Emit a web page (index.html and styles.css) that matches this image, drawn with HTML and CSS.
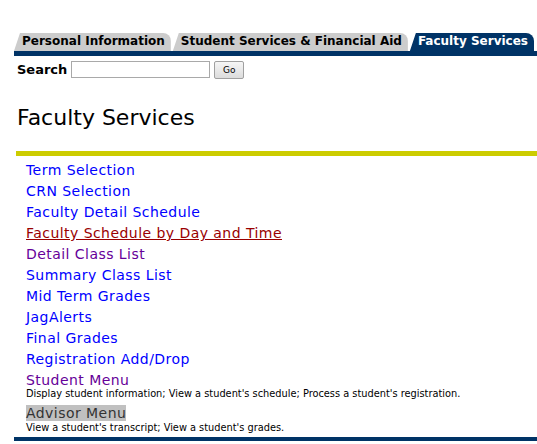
FILE: index.html
```html
<!DOCTYPE html>
<html lang="en">
<head>
    <meta charset="UTF-8">
    <title>Faculty Services</title>
    <link rel="stylesheet" href="styles.css">
</head>
<body>
    <div class="tabs">
        <a class="tab" href="#">Personal Information</a>
        <a class="tab" href="#">Student Services &amp; Financial Aid</a>
        <a class="tab active" href="#">Faculty Services</a>
    </div>
    <div class="tab-bar"></div>

    <form class="search">
        <label for="keyword">Search</label>
        <input type="text" id="keyword" name="keyword">
        <button type="submit">Go</button>
    </form>

    <h1>Faculty Services</h1>
    <div class="rule"></div>

    <div class="menu">
        <a href="#">Term Selection</a>
        <a href="#">CRN Selection</a>
        <a href="#">Faculty Detail Schedule</a>
        <a href="#" class="hover">Faculty Schedule by Day and Time</a>
        <a href="#" class="visited">Detail Class List</a>
        <a href="#">Summary Class List</a>
        <a href="#">Mid Term Grades</a>
        <a href="#">JagAlerts</a>
        <a href="#">Final Grades</a>
        <a href="#">Registration Add/Drop</a>
        <div class="item">
            <a href="#" class="visited">Student Menu</a>
            <span class="desc">Display student information; View a student's schedule; Process a student's registration.</span>
        </div>
        <div class="item second">
            <a href="#" class="focus"><span>Advisor Menu</span></a>
            <span class="desc">View a student's transcript; View a student's grades.</span>
        </div>
    </div>

    <div class="footer-bar"></div>
    <div class="release">RELEASE: 8.7</div>
</body>
</html>
```

FILE: styles.css
```css
:root {
    --navy: #003366;
    --tab-gray: #cccccc;
    --olive: #cccc00;
    --link: #0000ff;
    --visited: #660099;
    --hover: #990000;
}

body {
    margin: 0;
    padding: 0 0 0 14px;
    font-family: 'DejaVu Sans', Verdana, sans-serif;
    color: #000;
    background: #fff;
}

.tabs {
    display: flex;
    align-items: flex-end;
    gap: 2px;
    padding-top: 33px;
    height: 18px;
}

.tab {
    display: block;
    height: 18px;
    line-height: 17px;
    padding: 0 6px 0 8px;
    background-color: var(--tab-gray);
    color: #000;
    font-size: 12px;
    font-weight: bold;
    text-decoration: none;
    border-top-right-radius: 8px;
    clip-path: polygon(0 100%, 6px 0, 100% 0, 100% 100%);
    white-space: nowrap;
}

.tab.active {
    background-color: var(--navy);
    color: #fff;
}

.tab-bar {
    height: 5px;
    background-color: var(--navy);
}

.search {
    display: flex;
    align-items: center;
    gap: 3px;
    margin: 5px 0 0 3px;
    height: 17px;
}

.search label {
    font-size: 13px;
    font-weight: bold;
}

.search input {
    width: 137px;
    height: 15px;
    padding: 0;
    margin: 0 0 0 1px;
    border: 1px solid #a9a9a9;
    font-size: 11px;
}

.search button {
    height: 18px;
    width: 30px;
    margin-left: 1px;
    padding: 0;
    font-family: 'DejaVu Sans', Verdana, sans-serif;
    font-size: 9px;
    color: #000;
    background: linear-gradient(#f6f6f6, #dcdcdc);
    border: 1px solid #a0a0a0;
    border-radius: 2px;
}

h1 {
    margin: 26px 0 0 3px;
    font-size: 22px;
    font-weight: normal;
    line-height: 28px;
}

.rule {
    height: 5px;
    margin: 19px 0 0 2px;
    background-color: var(--olive);
}

.menu {
    padding: 4px 0 0 12px;
}

.menu a {
    display: block;
    font-size: 14px;
    line-height: 21px;
    letter-spacing: 0.45px;
    color: var(--link);
    text-decoration: none;
}

.menu a.visited {
    color: var(--visited);
}

.menu a.hover {
    color: var(--hover);
    text-decoration: underline;
}

.item a {
    line-height: 16px;
    padding-top: 2px;
}

.item.second {
    margin-top: 3px;
}

.item.second .desc {
    margin-top: 1px;
}

.item a.focus span {
    color: #333333;
    background-color: #c0c0c0;
}

.desc {
    display: block;
    font-size: 9.8px;
    line-height: 12px;
}

.footer-bar {
    height: 4px;
    margin-top: 3px;
    background-color: var(--navy);
}

.release {
    font-size: 13px;
    font-weight: bold;
    margin-top: 1px;
}
```
